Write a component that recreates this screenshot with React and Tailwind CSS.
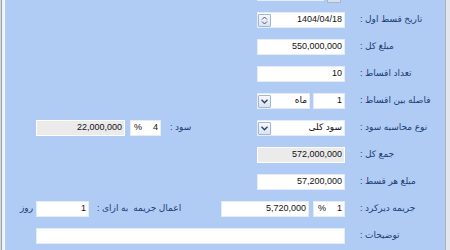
import React from "react"

const font = "font-['Liberation_Sans','DejaVu_Sans',sans-serif]"

function Btn({ down }) {
  return (
    <div className="w-[13px] h-[13px] shrink-0 border border-[#a3b6d2] rounded-[1px] bg-gradient-to-b from-[#f7f9fc] to-[#d9e3f1] flex flex-col items-center justify-center">
      {down ? (
        <svg width="7" height="5" viewBox="0 0 7 5">
          <path d="M0.5 0.8 L3.5 3.8 L6.5 0.8" fill="none" stroke="#2c3f5e" strokeWidth="1.3" />
        </svg>
      ) : (
        <svg width="7" height="9" viewBox="0 0 7 9">
          <path d="M1 3.5 L3.5 1 L6 3.5" fill="none" stroke="#4a5b76" strokeWidth="1" />
          <path d="M1 5.5 L3.5 8 L6 5.5" fill="none" stroke="#4a5b76" strokeWidth="1" />
        </svg>
      )}
    </div>
  )
}

function Box({ w, gray, children }) {
  return (
    <div
      className={`h-4 shrink-0 border flex items-center justify-end pr-[2px] text-[9px] text-[#111] ${
        gray ? "bg-[#ebebeb] border-white" : "bg-white border-[#e4ecf8]"
      }`}
      style={{ width: w }}
    >
      {children}
    </div>
  )
}

function Label({ children }) {
  return (
    <div dir="rtl" className="w-[85px] shrink-0 text-left text-[9px] text-[#213c74] whitespace-nowrap">
      {children}
    </div>
  )
}

function Sp({ w }) {
  return <div className="shrink-0" style={{ width: w }} />
}

export default function App() {
  return (
    <div className={`w-[450px] h-[250px] overflow-hidden flex ${font}`}>
      <div className="w-px bg-[#d0d7e1]" />
      <div className="w-px bg-[#98a2ae]" />
      <div className="w-[2px] bg-[#eef1f5]" />
      <div className="w-px bg-[#f8f9fb]" />
      <div className="w-[440px] bg-[#b0ccf5] flex flex-col gap-[11px] mt-[-15px]">
        {/* row 0 (cut off) */}
        <div className="flex h-4 items-start">
          <Sp w={252} />
          <Box w={67} />
          <Sp w={3} />
          <div className="w-[14px] h-[18px] shrink-0 border border-[#a3b6d2] bg-[#d6dfec]" />
        </div>

        <div className="flex h-4 items-center">
          <Sp w={252} />
          <div className="w-[88px] h-4 shrink-0 bg-white border border-[#e4ecf8] flex items-center justify-between pr-[2px] text-[9px] text-[#111]">
            <Btn />
            <span>1404/04/18</span>
          </div>
          <Sp w={15} />
          <Label>تاریخ قسط اول :</Label>
        </div>

        <div className="flex h-4 items-center">
          <Sp w={252} />
          <Box w={88}>550,000,000</Box>
          <Sp w={15} />
          <Label>مبلغ کل :</Label>
        </div>

        <div className="flex h-4 items-center">
          <Sp w={252} />
          <Box w={88}>10</Box>
          <Sp w={15} />
          <Label>تعداد اقساط :</Label>
        </div>

        <div className="flex h-4 items-center">
          <Sp w={252} />
          <div className="w-[53px] h-4 shrink-0 bg-white border border-[#e4ecf8] flex items-center justify-between pr-[2px] text-[9px] text-[#111]">
            <Btn down />
            <span>ماه</span>
          </div>
          <Sp w={3} />
          <Box w={32}>1</Box>
          <Sp w={15} />
          <Label>فاصله بین اقساط :</Label>
        </div>

        <div className="flex h-4 items-center">
          <Sp w={31} />
          <Box w={89} gray>22,000,000</Box>
          <Sp w={5} />
          <div className="w-[31px] h-4 shrink-0 bg-white border border-[#e4ecf8] flex items-center justify-between pl-[3px] pr-[2px] text-[9px] text-[#111]">
            <span>%</span>
            <span>4</span>
          </div>
          <div className="w-[96px] shrink-0 pl-[9px] text-[9px] text-[#213c74] whitespace-nowrap">
            <div dir="rtl" className="w-[28px] text-left">سود :</div>
          </div>
          <div className="w-[88px] h-4 shrink-0 bg-white border border-[#e4ecf8] flex items-center justify-between pr-[2px] text-[9px] text-[#111]">
            <Btn down />
            <span>سود کلی</span>
          </div>
          <Sp w={15} />
          <Label>نوع محاسبه سود :</Label>
        </div>

        <div className="flex h-4 items-center">
          <Sp w={252} />
          <Box w={88} gray>572,000,000</Box>
          <Sp w={15} />
          <Label>جمع کل :</Label>
        </div>

        <div className="flex h-4 items-center">
          <Sp w={252} />
          <Box w={88}>57,200,000</Box>
          <Sp w={15} />
          <Label>مبلغ هر قسط :</Label>
        </div>

        <div className="flex h-4 items-center">
          <Sp w={15} />
          <div className="w-4 shrink-0 text-[9px] text-[#213c74]">روز</div>
          <Box w={53}>1</Box>
          <Sp w={8} />
          <div dir="rtl" className="w-[124px] shrink-0 text-left text-[9px] text-[#213c74] whitespace-pre">اعمال جریمه  به ازای :</div>
          <Box w={88}>5,720,000</Box>
          <Sp w={4} />
          <div className="w-[32px] h-4 shrink-0 bg-white border border-[#e4ecf8] flex items-center justify-between pl-[4px] pr-[2px] text-[9px] text-[#111]">
            <span>%</span>
            <span>1</span>
          </div>
          <Sp w={15} />
          <Label>جریمه دیرکرد :</Label>
        </div>

        <div className="flex h-4 items-center">
          <Sp w={31} />
          <Box w={309} />
          <Sp w={15} />
          <Label>توضیحات :</Label>
        </div>
      </div>
      <div className="w-px bg-[#a7b2c2]" />
      <div className="w-[4px] bg-[#e3e7ed]" />
    </div>
  )
}
